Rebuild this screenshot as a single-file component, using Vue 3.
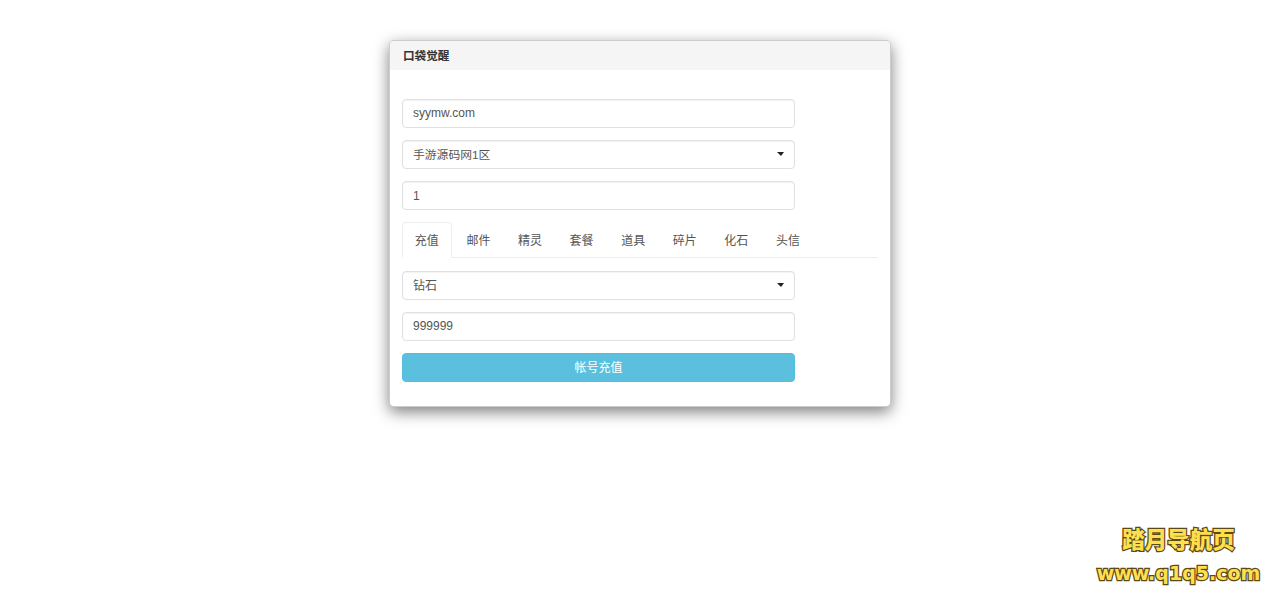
<script setup>
const tabs = ['充值', '邮件', '精灵', '套餐', '道具', '碎片', '化石', '头信']
</script>

<template>
  <div class="page">
    <div class="panel">
      <div class="heading">口袋觉醒</div>
      <div class="body">
        <div class="fields">
          <div class="field">syymw.com</div>
          <div class="field select"><span class="wide">手游源码网1区</span><i class="caret"></i></div>
          <div class="field low">1</div>
        </div>
        <ul class="tabs">
          <li v-for="(t, i) in tabs" :key="t" :class="['tab', { active: i === 0 }]">{{ t }}</li>
        </ul>
        <div class="fields">
          <div class="field select"><span>钻石</span><i class="caret"></i></div>
          <div class="field">999999</div>
          <button class="submit" type="button">帐号充值</button>
        </div>
      </div>
    </div>
    <div class="mark">
      <div class="mark-title">踏月导航页</div>
      <div class="mark-url">www.q1q5.com</div>
    </div>
  </div>
</template>

<style>
html, body { margin: 0; background: #fff; }
</style>

<style scoped>
.page {
  position: relative;
  height: 600px;
  overflow: hidden;
  padding-top: 40px;
  box-sizing: border-box;
  font-family: "Liberation Sans", "Noto Sans CJK SC", sans-serif;
  font-size: 12px;
  color: #444;
}
.panel {
  width: 502px;
  height: 367px;
  margin-left: 389px;
  box-sizing: border-box;
  background: #fff;
  border: 1px solid rgba(0, 0, 0, .2);
  border-radius: 5px;
  box-shadow: 0 5px 15px rgba(0, 0, 0, .5);
}
.heading {
  height: 29px;
  line-height: 29px;
  padding-left: 13px;
  background: #f5f5f5;
  border-radius: 4px 4px 0 0;
  font-size: 11.6px;
  font-weight: 700;
  color: #333;
}
.body { padding: 29px 12px 0; }
.fields {
  width: 393px;
  display: flex;
  flex-direction: column;
  gap: 12px;
}
.field {
  height: 29px;
  box-sizing: border-box;
  padding: 0 10px 2px;
  display: flex;
  align-items: center;
  justify-content: space-between;
  background: #fff;
  border: 1px solid #e0e0e0;
  border-radius: 4px;
  box-shadow: inset 0 1px 1px rgba(0, 0, 0, .05);
  color: #555;
}
.field.low { padding-bottom: 0; }
.wide { font-size: 11.8px; }
.caret {
  width: 0;
  height: 0;
  border-top: 4px solid #222;
  border-left: 4px solid transparent;
  border-right: 3.5px solid transparent;
}
.tabs {
  list-style: none;
  display: flex;
  gap: 2px;
  width: 476px;
  height: 36px;
  margin: 12px 0 13px;
  padding: 0;
  box-sizing: border-box;
  border-bottom: 1px solid #eee;
}
.tab {
  width: 49.6px;
  height: 36px;
  box-sizing: border-box;
  text-align: center;
  line-height: 36px;
  border: 1px solid transparent;
  border-radius: 4px 4px 0 0;
  color: #555;
}
.tab.active {
  background: #fff;
  border-color: #eee #eee #fff;
}
.submit {
  height: 29px;
  padding: 0 0 2px;
  border: 1px solid #56bcdb;
  border-radius: 4px;
  background: #5bc0de;
  color: #fff;
  font: inherit;
}
.mark {
  position: absolute;
  right: 19px;
  bottom: 16px;
  width: 165px;
  text-align: center;
  font-weight: 700;
  color: #ffdf4d;
  paint-order: stroke fill;
  -webkit-text-stroke: 2.5px #5a4a18;
}
.mark-title {
  font-family: "Noto Sans CJK SC", sans-serif;
  font-size: 22.5px;
  font-weight: 900;
  line-height: 30px;
  margin-bottom: 9px;
}
.mark-url {
  font-family: "DejaVu Sans", sans-serif;
  font-size: 19px;
  line-height: 22px;
}
</style>
